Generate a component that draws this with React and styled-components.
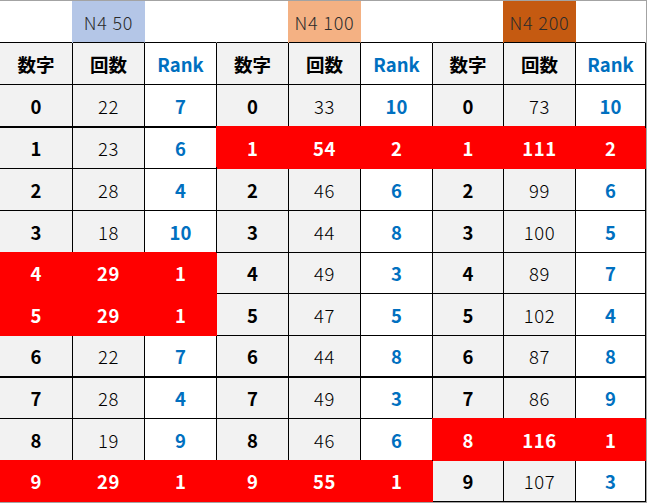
import styled, { createGlobalStyle } from "styled-components"

const RED = "#ff0000"
const BLUE = "#0070c0"
const GREY = "#f2f2f2"

const GlobalStyle = createGlobalStyle`
    body {
        margin: 0;
        background: #ffffff;
        font-family: "Noto Sans CJK JP", "Noto Sans", sans-serif;
    }
`

const groups = [
    {
        title: "N4 50",
        color: "#b4c6e7",
        rows: [[22, 7], [23, 6], [28, 4], [18, 10], [29, 1], [29, 1], [22, 7], [28, 4], [19, 9], [29, 1]],
    },
    {
        title: "N4 100",
        color: "#f4b183",
        rows: [[33, 10], [54, 2], [46, 6], [44, 8], [49, 3], [47, 5], [44, 8], [49, 3], [46, 6], [55, 1]],
    },
    {
        title: "N4 200",
        color: "#c55a11",
        rows: [[73, 10], [111, 2], [99, 6], [100, 5], [89, 7], [102, 4], [87, 8], [86, 9], [116, 1], [107, 3]],
    },
]

// rows after which excel has the thick rule
const thickAfter = [0, 6]

const Sheet = styled.div`
    width: 646px;
    border-top: 1px solid #a3a3a3;
    border-right: 1px solid #a3a3a3;
    border-bottom: 1px solid #a3a3a3;
    display: grid;
    grid-template-columns: 73px 72px 72px 72px 72px 72px 71px 72px 70px;
    grid-template-rows: 42px 42px 43px 41px 42px 42px 41px 42px 42px 41px 42px 41px;
`
const Title = styled.div`
    display: flex;
    align-items: center;
    justify-content: center;
    border-right: 1px solid transparent;
    border-bottom: 1px solid #000;
    background: ${({$bg}) => $bg || "#fff"};
    box-shadow: ${({$bg}) => $bg ? `-1px 0 0 ${$bg}` : "none"};
    color: #2b2b2b;
    font-size: 18px;
    font-weight: 300;
    letter-spacing: 0.8px;
`
const Cell = styled.div`
    display: flex;
    align-items: center;
    justify-content: center;
    font-size: 18.5px;
    letter-spacing: ${({$light}) => $light ? "0.6px" : "0"};
    border-right: 1px solid ${({$hot}) => $hot ? RED : "#000"};
    border-bottom: ${({$thick}) => $thick ? 2 : 1}px solid ${({$hot}) => $hot ? RED : "#000"};
    background: ${({$hot, $shade}) => $hot ? RED : $shade ? GREY : "#fff"};
    color: ${({$hot, $blue}) => $hot ? "#fff" : $blue ? BLUE : "#000"};
    font-weight: ${({$hot, $light}) => $hot ? 700 : $light ? 300 : 700};
    box-shadow: ${({$hot, $lift}) => $hot ? `-1px -${$lift}px 0 ${RED}` : "none"};
`

const App = () => {
    return (
        <>
            <GlobalStyle />
            <Sheet>
                {groups.map(g => [
                    <Title key={g.title + "a"} />,
                    <Title key={g.title + "b"} $bg={g.color}>{g.title}</Title>,
                    <Title key={g.title + "c"} />,
                ])}
                {groups.map(g => [
                    <Cell key={g.title + "h1"} $shade>数字</Cell>,
                    <Cell key={g.title + "h2"} $shade>回数</Cell>,
                    <Cell key={g.title + "h3"} $blue>Rank</Cell>,
                ])}
                {Array.from({length: 10}, (_, i) => groups.map(g => {
                    const [count, rank] = g.rows[i]
                    const hot = rank <= 2
                    const thick = thickAfter.includes(i)
                    const lift = thickAfter.includes(i - 1) ? 2 : 1
                    const common = {$hot: hot, $thick: thick, $lift: lift}
                    return [
                        <Cell key={g.title + i + "d"} {...common} $shade>{i}</Cell>,
                        <Cell key={g.title + i + "c"} {...common} $shade $light>{count}</Cell>,
                        <Cell key={g.title + i + "r"} {...common} $blue>{rank}</Cell>,
                    ]
                }))}
            </Sheet>
        </>
    )
}

export default App
